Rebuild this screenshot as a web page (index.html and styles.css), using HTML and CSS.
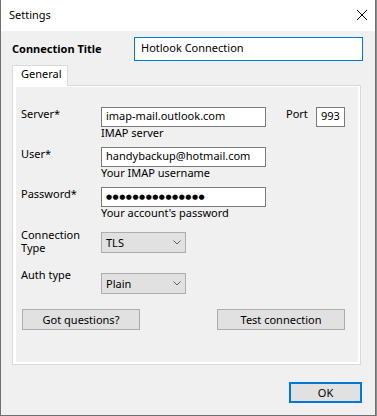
FILE: index.html
```html
<!DOCTYPE html>
<html>
<head>
<meta charset="utf-8">
<link rel="stylesheet" href="styles.css">
</head>
<body>
<div class="window">
  <div class="titlebar">
    <span class="title">Settings</span>
    <svg class="close" width="10" height="10" viewBox="0 0 10 10"><path d="M0 0 L10 10 M10 0 L0 10" stroke="#000" stroke-width="1" fill="none"/></svg>
  </div>
  <div class="body">
    <div class="title-row">
      <label class="title-label">Connection Title</label>
      <input class="title-input" type="text" value="Hotlook Connection">
    </div>
    <div class="tabs"><div class="tab">General</div></div>
    <div class="panel">
      <div class="page">
        <div class="field server">
          <label class="lbl">Server*</label>
          <input class="tb" type="text" value="imap-mail.outlook.com">
          <label class="lbl port-lbl">Port</label>
          <input class="tb port" type="text" value="993">
          <span class="hint">IMAP server</span>
        </div>
        <div class="field">
          <label class="lbl">User*</label>
          <input class="tb" type="text" value="handybackup@hotmail.com">
          <span class="hint">Your IMAP username</span>
        </div>
        <div class="field">
          <label class="lbl">Password*</label>
          <input class="tb pw" type="text" value="●●●●●●●●●●●●●●●">
          <span class="hint">Your account's password</span>
        </div>
        <div class="combo-row first">
          <label class="lbl2 conn">Connection<br>Type</label>
          <div class="combo"><span>TLS</span><svg class="chev" width="8" height="5" viewBox="0 0 8 5"><path d="M0.5 0.5 L4 4 L7.5 0.5" stroke="#606060" stroke-width="1" fill="none"/></svg></div>
        </div>
        <div class="combo-row">
          <label class="lbl2 auth">Auth type</label>
          <div class="combo"><span>Plain</span><svg class="chev" width="8" height="5" viewBox="0 0 8 5"><path d="M0.5 0.5 L4 4 L7.5 0.5" stroke="#606060" stroke-width="1" fill="none"/></svg></div>
        </div>
        <div class="btn-row">
          <button class="btn got">Got questions?</button>
          <button class="btn test">Test connection</button>
        </div>
      </div>
    </div>
    <div class="footer"><button class="btn ok">OK</button></div>
  </div>
</div>
</body>
</html>
```
FILE: styles.css
```css
html, body {
  margin: 0;
  padding: 0;
}
body {
  background: #8c8c8c;
  font-family: "Noto Sans", "DejaVu Sans", sans-serif;
  font-size: 11px;
  color: #000;
}
.window {
  width: 376px;
  height: 416px;
  box-sizing: border-box;
  border: 1px solid #6f6f6f;
  border-top: none;
  background: #f0f0f0;
  display: flex;
  flex-direction: column;
}
.titlebar {
  height: 31px;
  flex: none;
  background: #fff;
  display: flex;
  align-items: flex-start;
  padding-left: 8px;
  padding-right: 8px;
}
.title {
  line-height: 14px;
  margin-top: 8px;
}
.close {
  margin-left: auto;
  margin-top: 10px;
}
.body {
  padding-left: 11px;
}
.title-row {
  display: flex;
  align-items: center;
  margin-top: 6px;
}
.title-label {
  font-weight: bold;
  width: 122px;
  line-height: 14px;
}
.title-input {
  width: 229px;
  height: 24px;
  box-sizing: border-box;
  border: 1px solid #0078d7;
  padding: 0 0 3px 6px;
  margin: 0;
  font: inherit;
  color: #000;
  background: #fff;
  outline: none;
}
.tabs {
  display: flex;
  margin-top: 4px;
}
.tab {
  position: relative;
  z-index: 1;
  width: 56px;
  height: 21px;
  box-sizing: border-box;
  border: 1px solid #d9d9d9;
  border-bottom: none;
  background: #fff;
  padding: 1px 0 0 8px;
  line-height: 14px;
  margin-bottom: -1px;
}
.panel {
  width: 349px;
  height: 280px;
  box-sizing: border-box;
  border: 1px solid #d9d9d9;
  background: #fff;
  padding: 1px 2px 2px 3px;
}
.page {
  height: 100%;
  background: #f0f0f0;
  padding: 20px 0 0 5px;
  box-sizing: border-box;
}
.field {
  display: grid;
  grid-template-columns: 80px 165px;
  margin-bottom: 8px;
}
.field.server {
  grid-template-columns: 80px 165px 20px 30px 29px;
}
.lbl {
  line-height: 14px;
}
.port-lbl {
  grid-column: 4;
}
.tb {
  height: 20px;
  box-sizing: border-box;
  border: 1px solid #7a7a7a;
  padding: 0 0 4px 4px;
  margin: 0;
  font: inherit;
  color: #000;
  background: #fff;
  outline: none;
  width: 100%;
}
.tb.pw {
  font-family: "DejaVu Sans", sans-serif;
  font-size: 7px;
  letter-spacing: 0.5px;
  padding-bottom: 1px;
}
.hint {
  grid-column: 2 / span 4;
  grid-row: 2;
  line-height: 12px;
  white-space: nowrap;
}
.combo-row {
  display: grid;
  grid-template-columns: 80px 85px;
  align-items: start;
}
.combo-row.first {
  margin-top: 13px;
  margin-bottom: 19px;
}
.lbl2 {
  line-height: 13px;
}
.lbl2.conn {
  margin-top: -4px;
}
.lbl2.auth {
  margin-top: -5px;
}
.combo {
  height: 21px;
  box-sizing: border-box;
  border: 1px solid #adadad;
  background: #e1e1e1;
  display: flex;
  align-items: center;
  padding-left: 4px;
  line-height: 14px;
}
.chev {
  margin-left: auto;
  margin-right: 4px;
}
.btn-row {
  display: flex;
  justify-content: space-between;
  width: 323px;
  margin-left: 1px;
  margin-top: 15px;
}
.btn {
  height: 21px;
  box-sizing: border-box;
  border: 1px solid #adadad;
  background: #e1e1e1;
  font: inherit;
  color: #000;
  padding: 0;
  margin: 0;
  line-height: 14px;
}
.btn.got { width: 118px; }
.btn.test { width: 128px; }
.footer {
  display: flex;
  justify-content: flex-end;
  padding-right: 13px;
  margin-top: 17px;
}
.btn.ok {
  width: 73px;
  border: 2px solid #0078d7;
}
```
